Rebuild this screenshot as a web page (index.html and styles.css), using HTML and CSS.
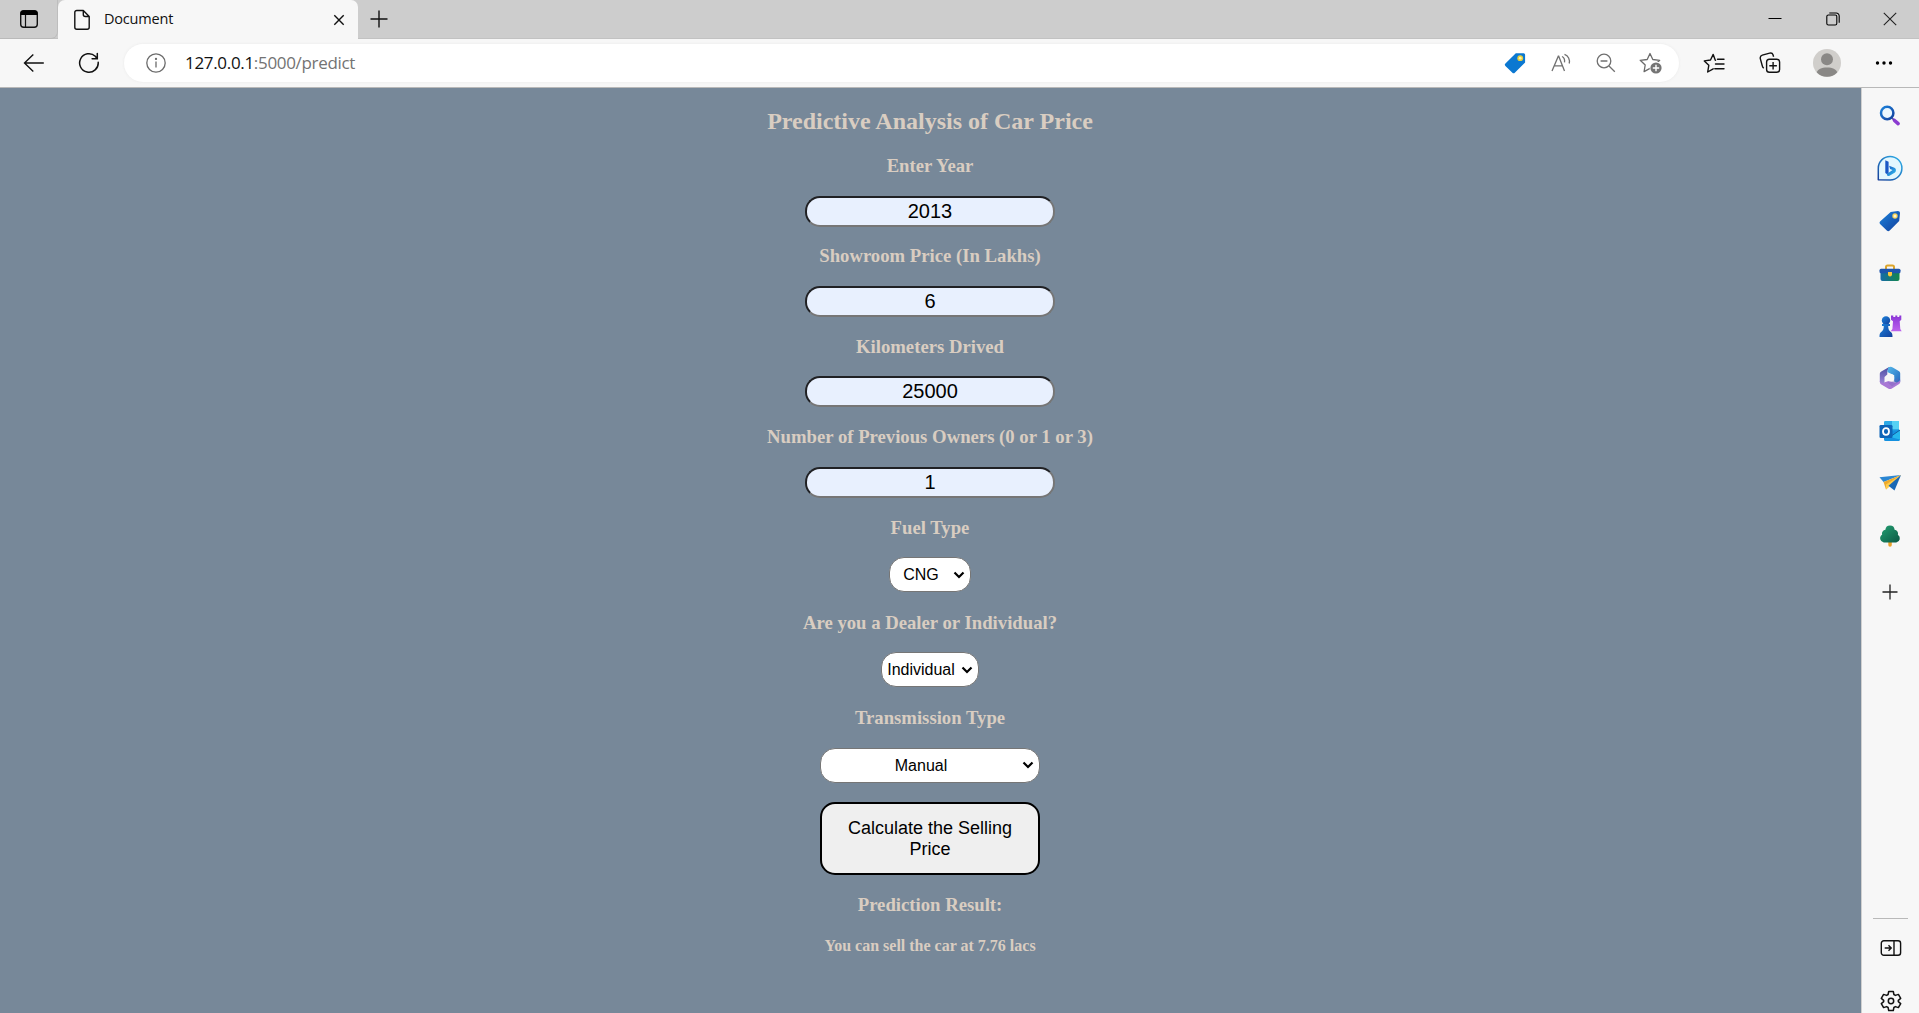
FILE: index.html
```html
<!DOCTYPE html>
<html lang="en">
<head>
<meta charset="utf-8">
<title>Document</title>
<link rel="stylesheet" href="styles.css">
</head>
<body>
<div class="browser">
  <header class="tabs">
    <div class="workspace">
      <svg width="20" height="20" viewBox="0 0 20 20"><rect x="1.7" y="1.7" width="16.6" height="16.6" rx="3" fill="none" stroke="#111" stroke-width="1.4"/><path d="M1.5 6V4.5a3 3 0 0 1 3-3h11a3 3 0 0 1 3 3V6z" fill="#000"/><path d="M6.5 6v12" stroke="#111" stroke-width="1.2"/></svg>
    </div>
    <div class="tab">
      <svg class="file" width="18" height="22" viewBox="0 0 18 22" fill="none" stroke="#111" stroke-width="1.4" stroke-linejoin="round"><path d="M10.3 1.5H3.8a2 2 0 0 0-2 2v14.8a2 2 0 0 0 2 2h10.4a2 2 0 0 0 2-2V7.5zM10.3 1.5v4a2 2 0 0 0 2 2h3.9"/></svg>
      <span class="tab-title">Document</span>
      <svg width="12" height="12" viewBox="0 0 12 12"><path d="M1.3 1.3l9.4 9.4M10.7 1.3l-9.4 9.4" stroke="#111" stroke-width="1.4"/></svg>
    </div>
    <svg class="new-tab" width="18" height="18" viewBox="0 0 18 18"><path d="M9 .5v17M.5 9h17" stroke="#111" stroke-width="1.4"/></svg>
    <div class="window-buttons">
      <span><svg width="14" height="14" viewBox="0 0 14 14"><path d="M.5 6.500h13" stroke="#000"/></svg></span>
      <span><svg width="14" height="14" viewBox="0 0 14 14" fill="none" stroke="#000" stroke-width="1.1"><rect x=".8" y="3" width="10" height="10" rx="1.6"/><path d="M3.3 1h6.9a3 3 0 0 1 3 3v6.7"/></svg></span>
      <span><svg width="14" height="14" viewBox="0 0 14 14"><path d="M.8.8l12.4 12.4M13.2.8L.8 13.2" stroke="#222" stroke-width="1.1"/></svg></span>
    </div>
  </header>

  <nav class="toolbar">
    <svg class="back" width="22" height="20" viewBox="0 0 22 20" fill="none" stroke="#111" stroke-width="1.4"><path d="M10.3 1.5L1.5 10l8.8 8.5M1.5 10h19.3"/></svg>
    <svg class="reload" width="22" height="22" viewBox="0 0 22 22" fill="none" stroke="#111" stroke-width="1.5" stroke-linecap="round"><path d="M20.2 10.2A9.3 9.3 0 1 1 17.3 4.2L19.2 6.7M19.3 1.5v5.3h-5.2"/></svg>
    <div class="address">
      <svg width="20" height="20" viewBox="0 0 20 20" fill="none" stroke="#6b6b6b" stroke-width="1.3"><circle cx="10" cy="10" r="9.2"/><path d="M10 8.4v6.1"/><circle cx="10" cy="5.9" r=".5" fill="#6b6b6b"/></svg>
      <span class="url">127.0.0.1<span>:5000/predict</span></span>
      <div class="address-actions">
        <span><svg width="22" height="22" viewBox="0 0 22 22"><path d="M11.8 1.3h7.8a1.5 1.5 0 0 1 1.5 1.5v7.8L10.8 20.7a1.7 1.7 0 0 1-2.4 0l-7-6.7a1.7 1.7 0 0 1 0-2.5z" fill="#0b78d1"/><circle cx="16.2" cy="6.2" r="2.9" fill="#e8cf3b"/><circle cx="16.2" cy="6.2" r="1.4" fill="#fff3a8"/></svg></span>
        <span><svg width="20" height="20" viewBox="0 0 20 20" fill="none" stroke="#707070" stroke-width="1.3"><path d="M1 18L7.3 3.2h.4L13.5 18M3.3 12.8h8.3M11 3.5c2 1 2.9 3.3 2.5 5.8M13.5 1.3c3.9 1.5 5.6 5.5 4.7 9.2"/></svg></span>
        <span><svg width="20" height="20" viewBox="0 0 20 20" fill="none" stroke="#707070" stroke-width="1.3"><circle cx="8" cy="8" r="6.8"/><path d="M4.6 8h6.8M13 13l5.8 5.8"/></svg></span>
        <span><svg width="24" height="22" viewBox="0 0 24 22"><path d="M11 1.5l2.8 6 6.9.8-5 4.7 1.1 6.6-5.8-3.2-5.9 3.2L6.2 13l-5-4.7 7-.8z" fill="none" stroke="#6b6b6b" stroke-width="1.3" stroke-linejoin="round"/><circle cx="17" cy="16" r="6.4" fill="#fff"/><circle cx="17" cy="16" r="5.6" fill="#747474"/><path d="M17 12.8v6.4M13.8 16h6.4" stroke="#fff" stroke-width="1.4"/></svg></span>
      </div>
    </div>
    <div class="browser-actions">
      <span><svg width="22" height="22" viewBox="0 0 22 22" fill="none" stroke="#111" stroke-width="1.4" stroke-linejoin="round" stroke-linecap="round"><path d="M12.5 8.2h-.2L10.2 2.4 7.5 8l-6.2.9 4.5 4.4L4.7 20l5.5-3.2M14.5 7.2h6.5M12.5 12H21M11.8 16.8H21"/></svg></span>
      <span><svg width="22" height="22" viewBox="0 0 22 22" fill="none" stroke="#111" stroke-width="1.4"><rect x="7.6" y="7.3" width="13" height="13" rx="2.8"/><path d="M14.1 10v7.6M10.3 13.8h7.6M4.8 16.2a3 3 0 0 1-1.4-2L1.3 6.6a3 3 0 0 1 2-3.4l7.4-2.1a2.7 2.7 0 0 1 3.3 1.7l.6 2"/></svg></span>
      <span class="profile"><svg width="28" height="28" viewBox="0 0 28 28"><circle cx="14" cy="14" r="14" fill="#d0cecb"/><circle cx="14" cy="10.3" r="6" fill="#8a8886"/><path d="M3.8 23.4c1-3.5 4.6-5 10.2-5s9.2 1.5 10.2 5A14 14 0 0 1 3.8 23.4z" fill="#8a8886"/></svg></span>
      <span><svg width="18" height="6" viewBox="0 0 18 6"><circle cx="2.5" cy="3" r="1.7"/><circle cx="9" cy="3" r="1.7"/><circle cx="15.5" cy="3" r="1.7"/></svg></span>
    </div>
  </nav>

  <div class="content">
    <main class="page">
      <h2>Predictive Analysis of Car Price</h2>
      <form>
        <h3>Enter Year</h3>
        <div class="field"><input type="text" value="2013"></div>
        <h3>Showroom Price (In Lakhs)</h3>
        <div class="field"><input type="text" value="6"></div>
        <h3>Kilometers Drived</h3>
        <div class="field"><input type="text" value="25000"></div>
        <h3>Number of Previous Owners (0 or 1 or 3)</h3>
        <div class="field"><input type="text" value="1"></div>
        <h3>Fuel Type</h3>
        <div class="choice"><select class="fuel"><option>CNG</option><option>Petrol</option><option>Diesel</option></select></div>
        <h3>Are you a Dealer or Individual?</h3>
        <div class="choice"><select class="seller"><option>Individual</option><option>Dealer</option></select></div>
        <h3>Transmission Type</h3>
        <div class="choice"><select class="transmission"><option>Manual</option><option>Automatic</option></select></div>
        <button type="button">Calculate the Selling Price</button>
      </form>
      <h3>Prediction Result:</h3>
      <h4>You can sell the car at 7.76 lacs</h4>
    </main>

    <aside class="sidebar">
      <svg width="0" height="0" class="defs"><defs>
        <linearGradient id="blue" x1="0" y1="0" x2="1" y2="1"><stop offset="0" stop-color="#1d83dc"/><stop offset="1" stop-color="#123f9c"/></linearGradient>
        <linearGradient id="cyan" x1="0" y1="0" x2="1" y2="1"><stop offset="0" stop-color="#1656c4"/><stop offset="1" stop-color="#35c3ee"/></linearGradient>
        <linearGradient id="ring" x1="1" y1="0" x2="0" y2="1"><stop offset="0" stop-color="#2fb4ec"/><stop offset="1" stop-color="#173f99"/></linearGradient>
        <linearGradient id="box" x1="0" y1="0" x2="1" y2="0"><stop offset="0" stop-color="#176aa8"/><stop offset="1" stop-color="#13874c"/></linearGradient>
        <linearGradient id="violet" x1="0" y1="0" x2="0" y2="1"><stop offset="0" stop-color="#8b35d6"/><stop offset="1" stop-color="#bd62ed"/></linearGradient>
        <linearGradient id="green" x1="0" y1="0" x2="1" y2="1"><stop offset="0" stop-color="#24a173"/><stop offset="1" stop-color="#0b5844"/></linearGradient>
        <linearGradient id="loop-left" x1="0" y1="0" x2="0" y2="1"><stop offset="0" stop-color="#4c4fa0"/><stop offset="1" stop-color="#a48ade"/></linearGradient>
        <linearGradient id="loop-right" x1="0" y1="0" x2="1" y2="1"><stop offset="0" stop-color="#55b9ea"/><stop offset="1" stop-color="#2465be"/></linearGradient>
      </defs></svg>
      <span class="app"><svg width="22" height="22" viewBox="0 0 22 22"><path d="M15.500 15.500l3.600 3.100" stroke="#8c3bd1" stroke-width="3.600" stroke-linecap="round"/><path d="M12.300 12.300l2.600 2.500" stroke="#5a48b0" stroke-width="1.700"/><circle cx="8.200" cy="8" r="6.200" fill="#eaf7ff" stroke="url(#blue)" stroke-width="2.500"/></svg></span>
      <span class="app"><svg width="26" height="26" viewBox="0 0 26 26"><path d="M1.300 24.800V13.200A11.800 11.800 0 1 1 13.200 25z" fill="#e3f7fe" stroke="url(#ring)" stroke-width="1.500" stroke-linejoin="round"/><path d="M8.300 5.200l3.300 1.500v11.200l-1.500 1.400-1.800-1.200z" fill="#1857c5"/><path d="M10.200 18.800l5.400-3.700-2.500-1.200-1-3.100 5.300 2c1.700.7 2.200 3.200.6 4.700l-5.500 3.200c-1.500.8-3.500-.2-2.300-1.900z" fill="url(#cyan)"/></svg></span>
      <span class="app"><svg width="22" height="22" viewBox="0 0 22 22"><path d="M11.700 2L18.800.9c1.300 0 2.200.8 2.200 2L20.200 11l-9.500 9.600a2 2 0 0 1-2.900 0L1.300 14.200a2 2 0 0 1 0-2.900z" fill="url(#blue)"/><circle cx="16" cy="6" r="2.700" fill="#f4cf54"/><circle cx="16" cy="6" r="1.500" fill="#fff6cf"/></svg></span>
      <span class="app"><svg width="22" height="18" viewBox="0 0 22 18"><path d="M7 5V3a1.500 1.500 0 0 1 1.500-1.500h5A1.500 1.500 0 0 1 15 3v2" fill="none" stroke="#dda52b" stroke-width="2"/><path d="M1.500 8h19v7a2 2 0 0 1-2 2h-15a2 2 0 0 1-2-2z" fill="url(#box)"/><rect x=".5" y="4.800" width="21" height="4.500" rx="1.500" fill="#1d55ad"/><path d="M9 8h4v2.400a2 2 0 0 1-4 0z" fill="#ffc83d"/></svg></span>
      <span class="app"><svg width="24" height="24" viewBox="0 0 24 24"><path d="M13 1.500h2.300V3h2V1.500h2V3h2V1.500h2v4.300l-1.600 1.400.6 7.800 1.400 2.200h-11l1.700-2.200.6-7.800L13 5.800z" fill="url(#violet)"/><circle cx="8" cy="6.500" r="4.200" fill="url(#blue)"/><path d="M4 10h8v2h-1.800c0 3 .7 4.600 2.900 6.300 1.100.9 1.400 2 1.400 4.700H1.500c0-2.700.3-3.800 1.400-4.700C5.100 16.600 5.800 15 5.800 12H4z" fill="url(#blue)"/></svg></span>
      <span class="app"><svg width="22" height="24" viewBox="0 0 22 24"><path d="M11.500 1C9 2 8.300 4 8.300 8.500L5.500 11v8.500L2 17.700C1.200 17.200.8 16.500.8 15.500V8c0-1.200.5-2 1.500-2.600l7-4C10 1 10.700.8 11.500 1z" fill="url(#loop-left)"/><path d="M9.300 1.400c1.500-.8 3-.8 4.500 0L19.700 5c1 .6 1.500 1.400 1.500 2.600v7.600c0 2-2 2.800-3.700 1.700l-2.300-1.300V9.300L8.300 6z" fill="url(#loop-right)"/><path d="M21.200 13.500v2.200c0 1.200-.5 2-1.500 2.600l-6.800 4.100c-1.300.8-2.500.8-3.800 0L2 18.200C1 17.500.8 16.500.8 14.800c1 2.200 3 2.700 5 1.500l4.700-1.500c3 1.500 8.700 3.500 10.700-1.300z" fill="#a978d5"/><path d="M8 15.800l2.700 1 8.800-5-.5 4.700-6 4z" fill="#6d60b8" opacity=".35"/><circle cx="11.500" cy="11.700" r="3.700" fill="#f7f7f7"/></svg></span>
      <span class="app"><svg width="22" height="22" viewBox="0 0 22 22"><rect x="5" y="1" width="15" height="15" rx="1.300" fill="#2ca9e6"/><path d="M13 1h7v8h-7z" fill="#56d1f4"/><path d="M5 11l16-1v9.500c0 .8-.6 1.500-1.500 1.500h-13A1.500 1.500 0 0 1 5 19.500z" fill="#1490df"/><path d="M21 10v9.500L11 17z" fill="#26b7ed"/><path d="M13 15.500l8-5.500" stroke="#155ca1"/><rect x=".5" y="5" width="13" height="13" rx="1.300" fill="#0d64b8"/><ellipse cx="7" cy="11.500" rx="3" ry="3.300" fill="none" stroke="#fff" stroke-width="1.800"/></svg></span>
      <span class="app"><svg width="24" height="20" viewBox="0 0 24 20"><path d="M1.500 4.200L23 2 5.500 9z" fill="#2b86d2"/><path d="M5.500 9L23 2 8 16.500z" fill="#edaa2d"/><path d="M8 11.500L23 2 11.500 13.500 8 16.500z" fill="#ffcc4c"/><path d="M23 2L10.500 12.700l6 4.800z" fill="#1a68b5"/></svg></span>
      <span class="app"><svg width="22" height="22" viewBox="0 0 22 22"><path d="M9.300 15h3.500v5a1.700 1.700 0 0 1-3.500 0z" fill="#eaa12c"/><path d="M11 .5a4.700 4.700 0 0 1 4.600 4.300 3.900 3.900 0 0 1 3.300 5 4.200 4.200 0 0 1-1.700 7.700H4.800a4.200 4.200 0 0 1-1.700-7.700 3.900 3.900 0 0 1 3.300-5A4.700 4.700 0 0 1 11 .5z" fill="url(#green)"/></svg></span>
      <span class="app add"><svg width="16" height="16" viewBox="0 0 16 16"><path d="M8 .5v15M.5 8h15" stroke="#222" stroke-width="1.300"/></svg></span>
      <div class="sidebar-foot">
        <span class="app"><svg width="22" height="18" viewBox="0 0 22 18" fill="none" stroke="#111" stroke-width="1.400"><rect x="1.300" y="1.800" width="19.300" height="14.400" rx="2.500"/><path d="M14 2v14M4.700 9h6.300M8.500 6.300L11.200 9l-2.700 2.700"/></svg></span>
        <span class="app"><svg width="22" height="22" viewBox="0 0 22 22" fill="none" stroke="#111" stroke-width="1.500" stroke-linejoin="round"><path d="M8.700 1.500h4.600l.6 3 1.500.9 3-1 2.300 4-2.400 2v1.200l2.400 2-2.300 4-3-1-1.500.9-.6 3H8.700l-.6-3-1.500-.9-3 1-2.300-4 2.400-2v-1.200l-2.400-2 2.300-4 3 1 1.500-.9z"/><circle cx="11" cy="11" r="2.700"/></svg></span>
      </div>
    </aside>
  </div>
</div>
</body>
</html>
```

FILE: styles.css
```css
* { box-sizing: border-box; }
body { margin: 0; overflow: hidden; }
svg { display: block; flex: none; }
.browser {
  display: flex;
  flex-direction: column;
  height: 1013px;
  background: #f7f7f7;
  font-family: "Open Sans", "Noto Sans", sans-serif;
}

/* Tab strip */
.tabs {
  display: flex;
  height: 39px;
  background: #cdcdcd;
  border-bottom: 1px solid #c2c2c2;
}
.workspace {
  width: 58px;
  height: 39px;
  padding: 9px 0 0 19px;
  border-right: 1px solid #bdbdbd;
  border-bottom: 1px solid #bababa;
  border-radius: 0 0 7px 0;
}
.tab {
  display: flex;
  align-items: center;
  width: 300px;
  height: 39px;
  padding: 0 13px 0 15px;
  background: #f7f7f7;
  border-radius: 7px 7px 0 0;
}
.tab-title {
  flex: 1;
  padding-left: 13px;
  font-size: 14.5px;
  letter-spacing: -.2px;
  line-height: 36px;
  height: 38px;
  color: #111;
}
.new-tab { margin: 10px 0 0 12px; }
.window-buttons {
  display: flex;
  margin: 0 0 0 auto;
}
.window-buttons span {
  display: flex;
  justify-content: center;
  align-items: center;
  width: 57.5px;
  height: 37px;
}

/* Toolbar */
.toolbar {
  display: flex;
  align-items: center;
  height: 49px;
  padding-left: 23px;
  border-bottom: 1px solid #b8b8b8;
}
.reload { margin-left: 33px; }
.address {
  display: flex;
  align-items: center;
  width: 1555px;
  height: 38px;
  margin-left: 24px;
  padding-left: 22px;
  background: #fff;
  border-radius: 19px;
  box-shadow: 0 0 3px #e9e9e9;
}
.url {
  margin-left: 19px;
  padding-bottom: 2px;
  font-size: 17px;
  letter-spacing: -.32px;
  color: #111;
}
.url span { color: #737373; }
.address-actions { display: flex; margin-left: auto; margin-right: 5px; }
.address-actions span, .browser-actions span {
  display: flex;
  justify-content: center;
  align-items: center;
  width: 45.3px;
}
.browser-actions { display: flex; align-items: center; margin-left: 7px; }
.browser-actions span { width: 57px; }
.browser-actions span:first-child { width: 55px; }

/* Car price form */
.content { display: flex; flex: 1; min-height: 0; }
.page {
  width: 1861px;
  padding-right: 1px;
  background: #778899;
  color: #d9cdc1;
  font-family: "Liberation Serif", serif;
  text-align: center;
  overflow: hidden;
}
h2 { margin: 19.9px 0; font-size: 24px; line-height: 27px; }
h3 { margin: 18.72px 0; font-size: 18.72px; line-height: 21px; }
h4 { margin: 21.28px 0; font-size: 16px; line-height: 19px; }
.field { height: 32px; padding-top: 1px; }
.choice { height: 36.75px; padding-top: 1px; }
input {
  display: block;
  width: 250px;
  height: 31px;
  margin: 0 auto;
  padding: 1px 2px;
  border: 2px solid;
  border-color: #202124 #767676 #767676 #202124;
  border-radius: 15px;
  background: #e8f0fe;
  color: #000;
  font: 20px "Liberation Sans", sans-serif;
  text-align: center;
}
select {
  display: block;
  height: 35px;
  margin: 0 auto;
  padding: 0 22px 0 4px;
  border: 1px solid #767676;
  border-radius: 15px;
  appearance: none;
  background: #fff url("data:image/svg+xml,%3Csvg xmlns='http://www.w3.org/2000/svg' width='12' height='8'%3E%3Cpath d='M1.500 1.500L6 6l4.500-4.500' fill='none' stroke='black' stroke-width='2.200'/%3E%3C/svg%3E") no-repeat right 5px center;
  color: #000;
  font: 16px "Liberation Sans", sans-serif;
  text-align: center;
}
.fuel { width: 82px; }
.seller { width: 98px; }
.transmission { width: 220px; }
button {
  display: block;
  width: 220px;
  height: 73px;
  margin: 18.7px auto 0;
  padding: 1px 6px;
  border: 2px solid #000;
  border-radius: 15px;
  background: #efefef;
  color: #000;
  font: 18px/21px "Liberation Sans", sans-serif;
}

/* Sidebar */
.sidebar {
  display: flex;
  flex-direction: column;
  flex: 1;
  padding: 1.5px 1px 0 0;
  border-left: 1px solid #d0d0d0;
}
.defs { position: absolute; }
.app {
  display: flex;
  justify-content: center;
  align-items: center;
  height: 52.5px;
}
.add { margin-top: 4px; }
.sidebar-foot {
  width: 35px;
  height: 95px;
  margin: auto auto 0 11px;
  padding-top: 3px;
  border-top: 1px solid #b9b9b9;
}
```
